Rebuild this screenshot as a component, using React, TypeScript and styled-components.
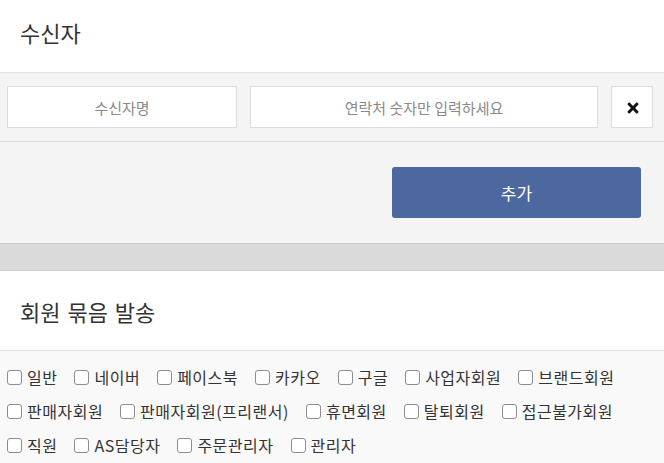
import styled, { createGlobalStyle } from 'styled-components'
import { FaTimes } from 'react-icons/fa'

const GlobalStyle = createGlobalStyle`
    html, body {
        margin: 0;
        padding: 0;
        background: #fff;
    }

    body {
        font-family: 'Noto Sans CJK KR', 'Noto Sans', sans-serif;
        color: #333;
    }

    * {
        box-sizing: border-box;
    }
`

const Page = styled.div`
    width: 664px;
    height: 463px;
    overflow: hidden;
    background: #f9f9f9;
`

const SectionTitle = styled.div<{ height: number; lift?: number }>`
    display: flex;
    align-items: center;
    height: ${props => props.height + 'px'};
    padding: 0 0 ${props => (props.lift || 0) + 'px'} 20px;
    background: #fff;
    border-bottom: 1px solid #e2e2e2;
    font-size: 22px;
    color: #333;
    word-spacing: 2px;
`

const InputRow = styled.div`
    display: flex;
    gap: 13px;
    padding: 13px 11px 13px 7px;
    background: #f4f4f4;
    border-bottom: 1px solid #dddddd;
`

const TextField = styled.input<{ width?: number }>`
    flex: ${props => props.width ? `0 0 ${props.width}px` : '1'};
    height: 42px;
    min-width: 0;
    border: 1px solid #dcdcdc;
    background: #fff;
    text-align: center;
    font-family: inherit;
    font-size: 15px;
    color: #333;
    outline: none;

    &::placeholder {
        color: #8a8a8a;
    }
`

const RemoveButton = styled.button`
    flex: 0 0 42px;
    height: 42px;
    display: flex;
    align-items: center;
    justify-content: center;
    padding: 2px 0 0 1px;
    border: 1px solid #dcdcdc;
    background: #fff;
    color: #111;
    font-size: 16px;
    cursor: pointer;
`

const ButtonRow = styled.div`
    display: flex;
    justify-content: flex-end;
    padding: 25px 23px 25px 0;
    background: #f4f4f4;
    border-bottom: 1px solid #cacaca;
`

const AddButton = styled.button`
    width: 249px;
    height: 51px;
    border: none;
    border-radius: 3px;
    background: #4d679f;
    color: #fff;
    font-family: inherit;
    font-size: 17px;
    cursor: pointer;
`

const Divider = styled.div`
    height: 27px;
    background: #dadada;
    border-bottom: 1px solid #cfcfcf;
`

const CheckList = styled.div`
    display: flex;
    flex-wrap: wrap;
    column-gap: 17px;
    padding: 9px 10px 0 7px;
`

const CheckItem = styled.label`
    display: flex;
    align-items: center;
    height: 34px;
    font-size: 16px;
    letter-spacing: .5px;
    color: #333;
    white-space: nowrap;
`

const Box = styled.input`
    appearance: none;
    width: 15px;
    height: 15px;
    margin: 1px 5px 0 0;
    border: 1px solid #8d8d8d;
    border-radius: 3px;
    background: #fff;
`

const groups = [
    '일반', '네이버', '페이스북', '카카오', '구글', '사업자회원', '브랜드회원',
    '판매자회원', '판매자회원(프리랜서)', '휴면회원', '탈퇴회원', '접근불가회원',
    '직원', 'AS담당자', '주문관리자', '관리자',
]

export default function App() {
    return (
        <Page>
            <GlobalStyle />
            <SectionTitle height={73} lift={8}>수신자</SectionTitle>
            <InputRow>
                <TextField width={230} placeholder="수신자명" />
                <TextField placeholder="연락처 숫자만 입력하세요" />
                <RemoveButton aria-label="삭제">
                    <FaTimes />
                </RemoveButton>
            </InputRow>
            <ButtonRow>
                <AddButton>추가</AddButton>
            </ButtonRow>
            <Divider />
            <SectionTitle height={80}>회원 묶음 발송</SectionTitle>
            <CheckList>
                {groups.map(name => (
                    <CheckItem key={name}>
                        <Box type="checkbox" />
                        {name}
                    </CheckItem>
                ))}
            </CheckList>
        </Page>
    )
}
